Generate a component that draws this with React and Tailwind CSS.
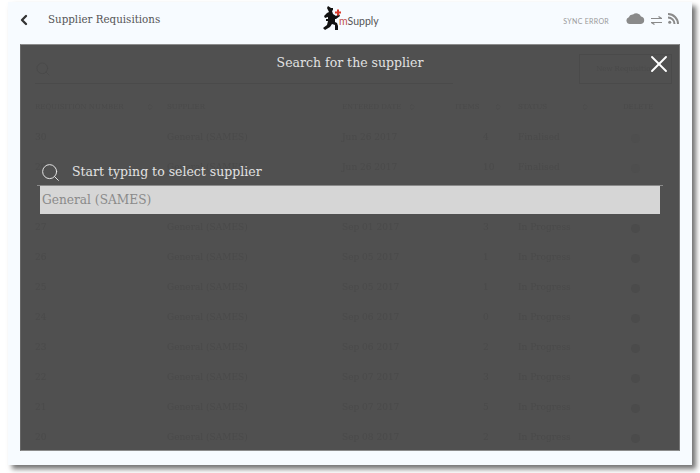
import React from "react";
import { ChevronLeft, X, Search, ChevronsUpDown } from "lucide-react";

const slab = { fontFamily: '"DejaVu Serif", "Liberation Serif", serif' };
const rows = [
  ["30", "Jun 26 2017", "4", "Finalised", false],
  ["29", "Jun 26 2017", "10", "Finalised", false],
  ["28", "", "", "", false],
  ["27", "Sep 01 2017", "3", "In Progress", true],
  ["26", "Sep 05 2017", "1", "In Progress", true],
  ["25", "Sep 05 2017", "1", "In Progress", true],
  ["24", "Sep 06 2017", "0", "In Progress", true],
  ["23", "Sep 06 2017", "2", "In Progress", true],
  ["22", "Sep 07 2017", "3", "In Progress", true],
  ["21", "Sep 07 2017", "5", "In Progress", true],
  ["20", "Sep 08 2017", "2", "In Progress", true],
];

function Row({ r }) {
  if (!r[1]) return <div className="h-[30px]" />;
  return (
    <div className="flex h-[30px] items-center text-[9px] text-[#4a4a4a]">
      <span className="w-[146px] pl-[14px]">{r[0]}</span>
      <span className="w-[175px]">General (SAMES)</span>
      <span className="w-[113px]">{r[1]}</span>
      <span className="w-[63px] pl-[28px]">{r[2]}</span>
      <span className="w-[113px]">{r[3]}</span>
      <span className={r[4] ? "h-[9px] w-[9px] rounded-full bg-[#4b4b4b]" : "h-[9px] w-[9px] rounded-full bg-[#4e4e4e]"} />
    </div>
  );
}

export default function App() {
  return (
    <div className="h-[473px] w-[700px] overflow-hidden bg-white pl-2 pt-[2px]" style={slab}>
      <div className="flex h-[463px] w-[684px] flex-col bg-[#f7fbff] px-3 shadow-[4px_4px_5px_rgba(0,0,0,0.55)]">
        <header className="flex h-[42px] shrink-0 items-center">
          <ChevronLeft size={16} strokeWidth={3.5} className="ml-[-4px] mb-[7px] text-[#333]" />
          <span className="mb-[6px] ml-4 w-[275px] text-[10.3px] text-[#555]">Supplier Requisitions</span>
          <div className="mb-[8px] flex items-center">
            <svg width="20" height="27" viewBox="0 0 20 27" aria-hidden="true">
              <path d="M5 0l3 2 2 0 0 2-1 1 1 3 3 2 3-2 1 2-4 3-1 0 0 3 2 1 1 3 0 4-3 0 0-5-3-1-2 3-5 3-2-2 4-3 1-4-2 0 0-2 2 0 0-2-3 1-1-2 3-3 2-1-2-4z" fill="#111" />
              <path d="M14 3.500h2v2h2v2h-2v2h-2v-2h-2v-2h2z" fill="#d8392b" />
            </svg>
            <span className="ml-[-4px] mt-[5px] text-[10.5px] text-[#555]" style={{ fontFamily: '"Lato", sans-serif' }}>
              <span className="text-[#c0504d]">m</span>Supply
            </span>
          </div>
          <span className="mb-[4px] ml-auto text-[7px] tracking-[0.3px] text-[#9a9a9a]" style={{ fontFamily: '"Lato", sans-serif' }}>SYNC ERROR</span>
          <svg width="19" height="13" viewBox="0 0 19 13" className="mb-[11px] ml-[17px]" aria-hidden="true">
            <path d="M3.800 13a3.500 3.500 0 0 1-1-6.800A4 4 0 0 1 7 3.500 5 5 0 0 1 15 5.500a3.800 3.800 0 0 1 0 7.500z" fill="#8a8a8a" />
          </svg>
          <svg width="11" height="9" viewBox="0 0 11 9" className="mb-[5px] ml-[6px]" aria-hidden="true">
            <path d="M0 2.500h8.500M7.500 0.500l3 2-3 0M11 6.500H2.500M3.500 8.500l-3-2 3 0" stroke="#8a8a8a" strokeWidth="1.200" fill="none" />
          </svg>
          <svg width="12" height="11" viewBox="0 0 12 11" className="mb-[9px] ml-[6px]" aria-hidden="true">
            <circle cx="1.700" cy="9.300" r="1.500" fill="#8a8a8a" />
            <path d="M0 4.500a6.500 6.500 0 0 1 6.500 6.500M0 1a10 10 0 0 1 10 10" stroke="#8a8a8a" strokeWidth="2" fill="none" />
          </svg>
        </header>

        <main className="relative h-[407px] w-[660px] overflow-hidden border border-t-[#8c8c8c] border-r-[#777777] border-b-[#8c8c8c] border-l-[#666666] bg-[#505050]">
          <div className="blur-[0.6px]">
            <div className="flex h-[39px] items-end pl-[14px] pr-[7px]">
              <div className="flex h-[30px] w-[418px] items-center border-b border-[#4a4a4a]">
                <Search size={16} strokeWidth={1.5} className="text-[#4a4a4a]" />
              </div>
              <div className="ml-auto flex h-[30px] w-[93px] items-center justify-center border border-[#4a4a4a] text-[7px] text-[#4a4a4a]">New Requisition</div>
            </div>
            <div className="flex h-[46px] items-center text-[7px] text-[#4a4a4a]">
              <span className="flex w-[146px] items-center pl-[14px]">REQUISITION NUMBER<ChevronsUpDown size={8} className="ml-[22px]" /></span>
              <span className="w-[175px]">SUPPLIER</span>
              <span className="flex w-[113px] items-center">ENTERED DATE<ChevronsUpDown size={8} className="ml-[7px]" /></span>
              <span className="flex w-[63px] items-center">ITEMS<ChevronsUpDown size={8} className="ml-[14px]" /></span>
              <span className="flex w-[105px] items-center">STATUS<ChevronsUpDown size={8} className="ml-[34px]" /></span>
              <span>DELETE</span>
            </div>
            <div className="mt-[-7px]">
              {rows.map((r) => (
                <Row key={r[0]} r={r} />
              ))}
            </div>
          </div>

          {/* Modal that lies over the table */}
          <div className="absolute inset-0 flex flex-col">
            <div className="relative mt-2 flex h-5 items-center justify-center text-[12.5px] text-[#e2e2e2]">
              Search for the supplier
              <X size={28} strokeWidth={1.6} className="absolute right-[6px] top-[-3px] text-white" />
            </div>
            <div className="ml-4 mt-[86px] w-[626px]">
              <div className="flex h-[27px] items-center border-b border-[#8a8a8a]">
                <Search size={21} strokeWidth={1.1} className="ml-[3px] text-[#e6e6e6]" />
                <span className="ml-[11px] text-[12.5px] text-[#e2e2e2]">Start typing to select supplier</span>
              </div>
              <div className="ml-[3px] flex h-[28px] w-[620px] items-center bg-[#d6d6d6] pl-[2px] text-[12.2px] text-[#8a8a8a]">
                General (SAMES)
              </div>
            </div>
          </div>
        </main>
      </div>
    </div>
  );
}
